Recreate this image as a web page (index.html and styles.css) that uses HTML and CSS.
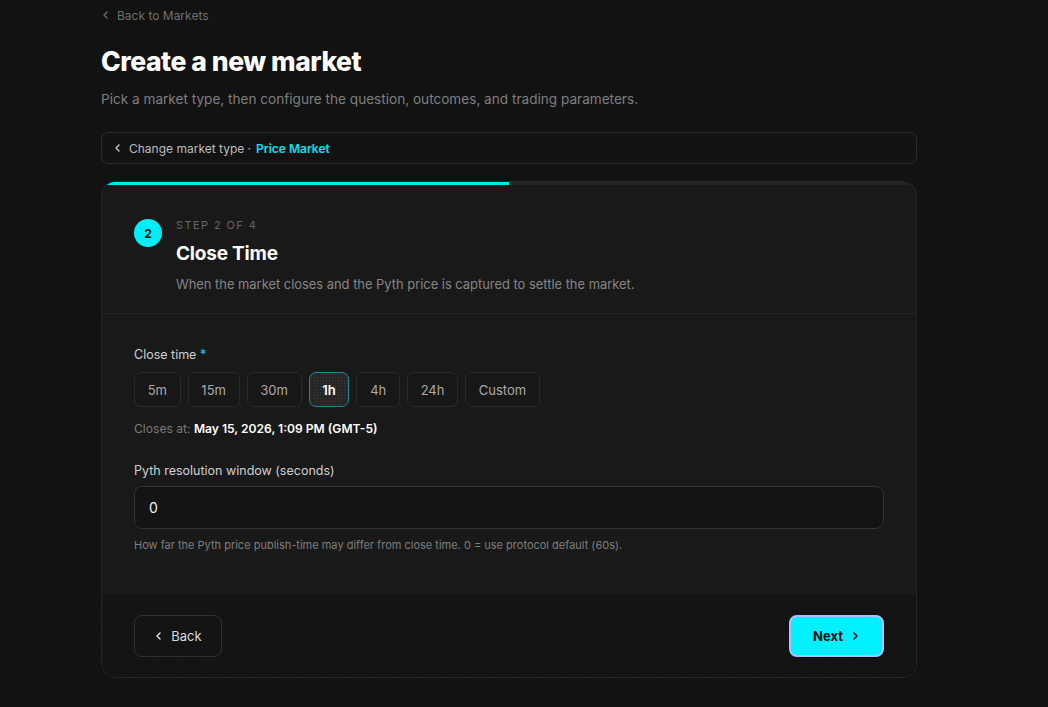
FILE: index.html
```html
<!DOCTYPE html>
<html lang="en">
<head>
<meta charset="utf-8">
<title>Create a new market</title>
<link rel="stylesheet" href="styles.css">
</head>
<body>
<main class="page">
  <a class="back-link" href="#">
    <svg class="chev" width="10" height="10" viewBox="0 0 10 10"><path d="M6 2 L3 5 L6 8" fill="none" stroke="currentColor" stroke-width="1.3" stroke-linecap="round" stroke-linejoin="round"/></svg>
    <span>Back to Markets</span>
  </a>
  <h1 class="title">Create a new market</h1>
  <p class="subtitle">Pick a market type, then configure the question, outcomes, and trading parameters.</p>

  <div class="type-bar">
    <svg class="chev" width="10" height="10" viewBox="0 0 10 10"><path d="M6 2 L3 5 L6 8" fill="none" stroke="currentColor" stroke-width="1.4" stroke-linecap="round" stroke-linejoin="round"/></svg>
    <span class="type-change">Change market type ·</span>
    <span class="type-name">Price Market</span>
  </div>

  <section class="card">
    <div class="progress"><div class="progress-fill" style="width:50%"></div></div>
    <header class="card-head">
      <div class="step-num">2</div>
      <div class="step-text">
        <div class="step-label">STEP 2 OF 4</div>
        <h2 class="step-title">Close Time</h2>
        <p class="step-desc">When the market closes and the Pyth price is captured to settle the market.</p>
      </div>
    </header>

    <div class="card-body">
      <div class="field">
        <label class="label">Close time <span class="req">*</span></label>
        <div class="chips">
          <button class="chip">5m</button>
          <button class="chip">15m</button>
          <button class="chip">30m</button>
          <button class="chip active">1h</button>
          <button class="chip">4h</button>
          <button class="chip">24h</button>
          <button class="chip">Custom</button>
        </div>
        <div class="closes">Closes at: <strong>May 15, 2026, 1:09 PM (GMT-5)</strong></div>
      </div>

      <div class="field field-2">
        <label class="label">Pyth resolution window (seconds)</label>
        <div class="input">0</div>
        <div class="help">How far the Pyth price publish-time may differ from close time. 0 = use protocol default (60s).</div>
      </div>
    </div>

    <footer class="card-foot">
      <button class="btn btn-back">
        <svg width="10" height="10" viewBox="0 0 10 10"><path d="M6 2 L3 5 L6 8" fill="none" stroke="currentColor" stroke-width="1.5" stroke-linecap="round" stroke-linejoin="round"/></svg>
        Back
      </button>
      <button class="btn btn-next">
        Next
        <svg width="10" height="10" viewBox="0 0 10 10"><path d="M4 2 L7 5 L4 8" fill="none" stroke="currentColor" stroke-width="1.5" stroke-linecap="round" stroke-linejoin="round"/></svg>
      </button>
    </footer>
  </section>
</main>
</body>
</html>
```
FILE: styles.css
```css
* { box-sizing: border-box; }
html, body { margin: 0; padding: 0; }
body {
  background: #121212;
  color: #fff;
  font-family: Inter, "Noto Sans", sans-serif;
  -webkit-font-smoothing: antialiased;
}
.page {
  width: 816px;
  margin-left: 101px;
  padding-top: 4px;
  padding-bottom: 30px;
}
.back-link {
  display: inline-flex;
  align-items: center;
  gap: 6px;
  color: #6e6e6e;
  font-size: 12px;
  text-decoration: none;
  height: 17px;
}
.title {
  margin: 21px 0 0;
  font-size: 26.5px;
  font-weight: 800;
  letter-spacing: -0.45px;
  line-height: 32px;
}
.subtitle {
  margin: 13px 0 0;
  color: #7f7f7f;
  font-size: 13.6px;
  line-height: 18px;
}
.type-bar {
  margin-top: 24px;
  height: 32px;
  border: 1px solid #2b2b2b;
  border-radius: 7px;
  display: flex;
  align-items: center;
  padding-left: 11px;
  font-size: 12px;
  color: #bdbdbd;
}
.type-bar .chev { margin-right: 6px; color: #cfcfcf; }
.type-change { margin-right: 5px; }
.type-name { color: #00e1f0; font-weight: 600; }

.card {
  margin-top: 17px;
  background: #191919;
  border: 1px solid #252525;
  border-radius: 14px;
  overflow: hidden;
}
.progress {
  height: 3px;
  background: #232323;
}
.progress-fill {
  height: 100%;
  background: #00e5f5;
}
.card-head {
  display: flex;
  gap: 14px;
  padding: 33px 32px 20px;
  border-bottom: 1px solid #262626;
}
.step-num {
  width: 28px;
  height: 28px;
  border-radius: 50%;
  background: #00eef9;
  color: #0c0c0c;
  font-size: 12px;
  font-weight: 700;
  display: flex;
  align-items: center;
  justify-content: center;
  margin-top: 1px;
  flex: none;
}
.step-label {
  font-size: 11px;
  letter-spacing: 1.4px;
  color: #666;
  line-height: 14px;
}
.step-title {
  margin: 10px 0 0;
  font-size: 19px;
  font-weight: 700;
  line-height: 24px;
  letter-spacing: -0.2px;
}
.step-desc {
  margin: 10px 0 0;
  font-size: 12.9px;
  color: #858585;
  line-height: 17px;
}
.card-body {
  padding: 33px 32px 43px;
}
.label {
  display: block;
  font-size: 12.5px;
  color: #cfcfcf;
  line-height: 16px;
}
.req { color: #00e1f0; }
.chips {
  display: flex;
  gap: 7px;
  margin-top: 9px;
}
.chip {
  height: 35px;
  padding: 0 12.7px;
  border: 1px solid #2a2a2a;
  border-radius: 7px;
  background: #171717;
  color: #a9a9a9;
  font-family: inherit;
  font-size: 13px;
}
.chip.active {
  border-color: #1d8b95;
  color: #fff;
  font-weight: 600;
  background-color: #262626;
  background-image: radial-gradient(#3a3a3a 0.6px, transparent 0.7px);
  background-size: 3px 3px;
}
.closes {
  margin-top: 14px;
  font-size: 12.1px;
  color: #7a7a7a;
  line-height: 15px;
}
.closes strong { color: #fff; font-weight: 600; }
.field-2 { margin-top: 27px; }
.input {
  margin-top: 7px;
  height: 43px;
  border: 1px solid #323232;
  border-radius: 8px;
  background: #141414;
  display: flex;
  align-items: center;
  padding-left: 14px;
  font-size: 14px;
  color: #f0f0f0;
}
.help {
  margin-top: 9px;
  font-size: 11px;
  color: #7e7e7e;
  line-height: 14px;
}
.card-foot {
  display: flex;
  justify-content: space-between;
  align-items: center;
  padding: 20px 32px 20px;
  background-color: #131313;
  background-image: radial-gradient(#1a1a1a 0.6px, transparent 0.7px);
  background-size: 3px 3px;
}
.btn {
  height: 42px;
  border-radius: 8px;
  font-family: inherit;
  font-size: 13px;
  display: inline-flex;
  align-items: center;
  gap: 7px;
}
.btn-back {
  width: 88px;
  justify-content: center;
  background: transparent;
  border: 1px solid #303030;
  color: #d8d8d8;
}
.btn-next {
  width: 95px;
  justify-content: center;
  background: #00f0ff;
  border: 2px solid #a8c4ff;
  color: #111;
  font-weight: 700;
}
```
